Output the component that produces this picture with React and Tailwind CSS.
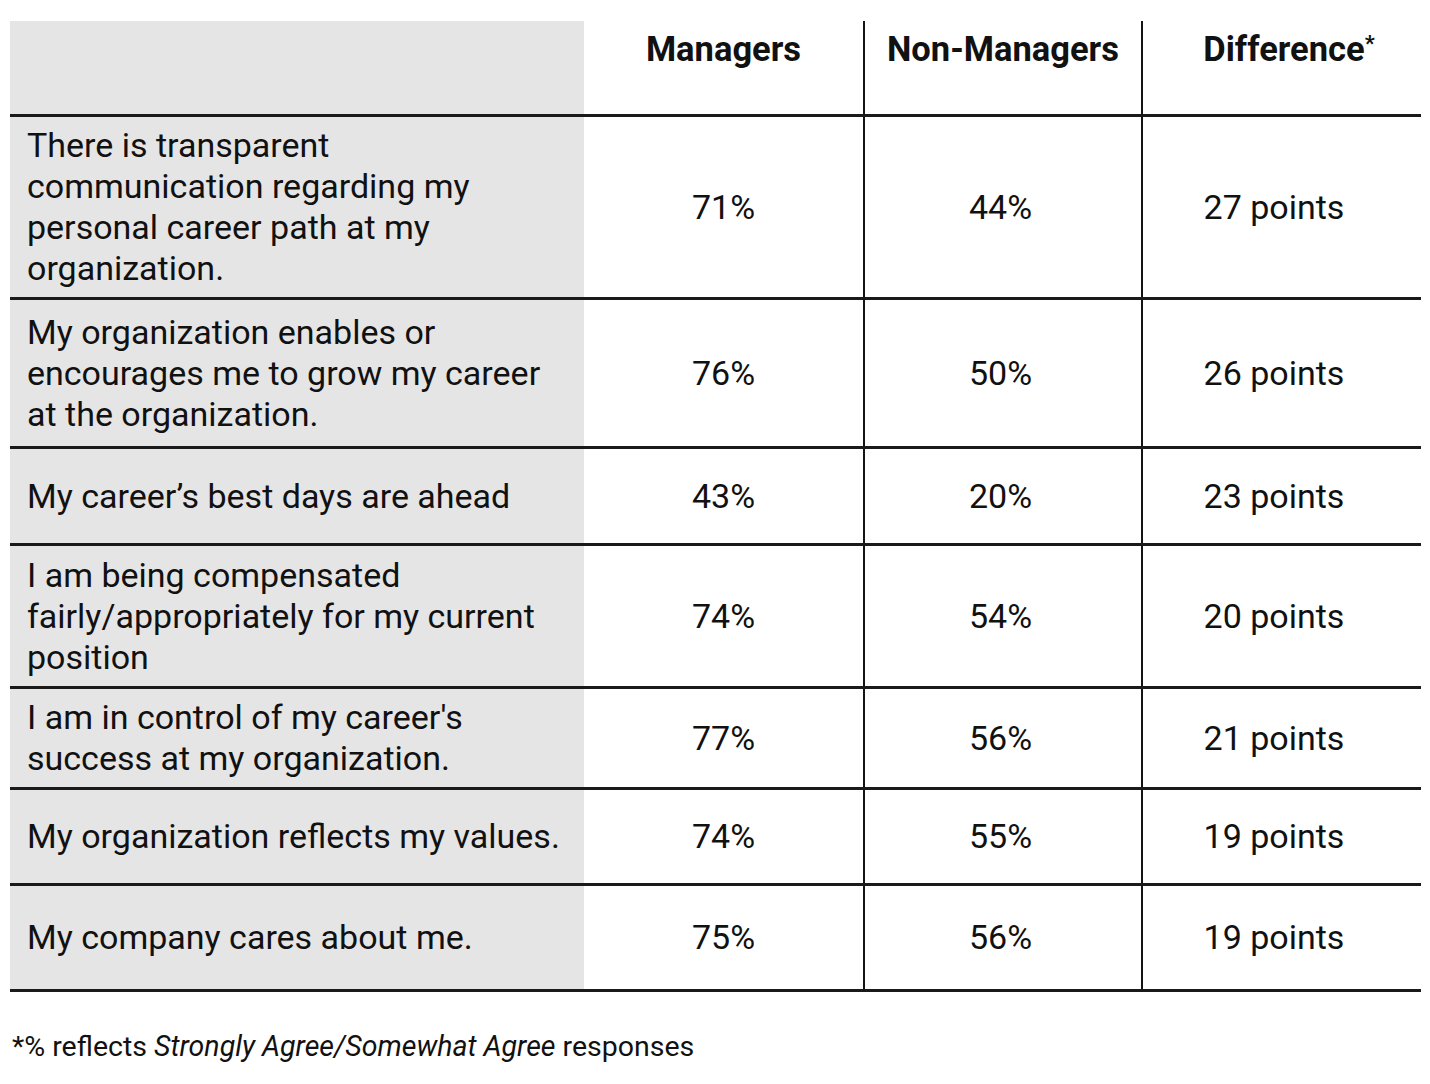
import React from "react";

const rows = [
  { h: "h-[183px]", text: "There is transparent communication regarding my personal career path at my organization.", m: "71%", n: "44%", d: "27 points" },
  { h: "h-[149px]", text: "My organization enables or encourages me to grow my career at the organization.", m: "76%", n: "50%", d: "26 points" },
  { h: "h-[97px]", text: "My career’s best days are ahead", m: "43%", n: "20%", d: "23 points" },
  { h: "h-[143px]", text: "I am being compensated fairly/appropriately for my current position", m: "74%", n: "54%", d: "20 points" },
  { h: "h-[101px]", text: "I am in control of my career's success at my organization.", m: "77%", n: "56%", d: "21 points" },
  { h: "h-[96px]", text: "My organization reflects my values.", m: "74%", n: "55%", d: "19 points" },
  { h: "h-[106px]", text: "My company cares about me.", m: "75%", n: "56%", d: "19 points" },
];

export default function App() {
  return (
    <div className="w-[1430px] h-[1084px] bg-white text-[#111111] font-['Roboto',sans-serif] overflow-hidden">
      <div className="ml-[10px] mt-[21px] w-[1411px]">
        <div className="grid grid-cols-[574px_279px_278px_280px] h-[93px]">
          <div className="bg-[#e6e5e6]" />
          <div className="flex justify-center pt-[8px] text-[34.5px] leading-[41px] font-bold">Managers</div>
          <div className="flex justify-center pt-[8px] text-[34.5px] leading-[41px] font-bold border-l-2 border-[#141414]">Non-Managers</div>
          <div className="flex justify-center pt-[8px] pl-[14px] text-[34.5px] leading-[41px] font-bold border-l-2 border-[#141414]">
            Difference<span className="text-[22px] leading-[30px]">*</span>
          </div>
        </div>
        {rows.map((r, i) => (
          <div key={i} className={`grid grid-cols-[574px_279px_278px_280px] ${r.h} border-t-[3px] border-[#1a1a1a]`}>
            <div className="bg-[#e6e5e6] flex items-center pl-[17px]">
              <div className="w-[545px] text-[34px] leading-[41px]">{r.text}</div>
            </div>
            <div className="flex items-center justify-center text-[34px]">{r.m}</div>
            <div className="flex items-center justify-center pr-[5px] text-[34px] border-l-2 border-[#141414]">{r.n}</div>
            <div className="flex items-center justify-center pr-[16px] text-[34px] border-l-2 border-[#141414]">{r.d}</div>
          </div>
        ))}
        <div className="border-t-[3px] border-[#1a1a1a]" />
      </div>
      <div className="mt-[38px] ml-[12px] text-[28.5px] leading-[34px]">
        *% reflects <span className="italic">Strongly Agree/Somewhat Agree</span> responses
      </div>
    </div>
  );
}
